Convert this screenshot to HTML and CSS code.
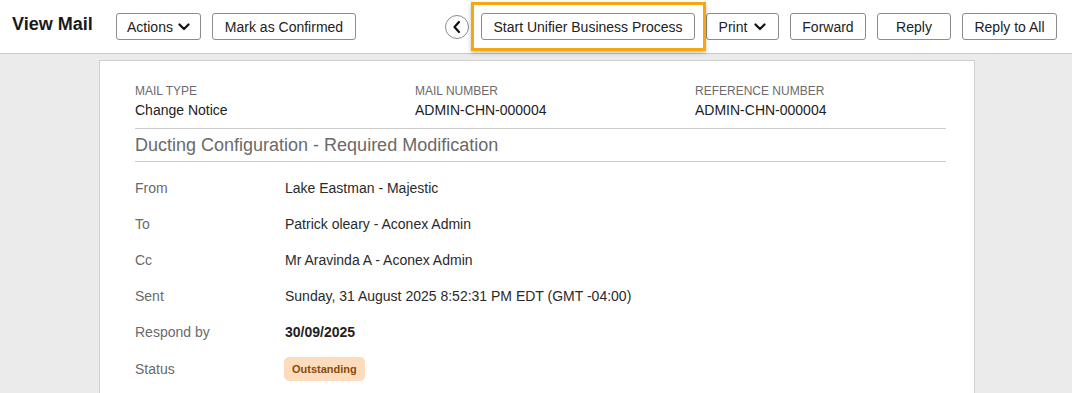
FILE: index.html
```html
<!DOCTYPE html>
<html>
<head>
<meta charset="utf-8">
<link rel="stylesheet" href="styles.css">
</head>
<body>
<header class="topbar">
  <h1 class="page-title">View Mail</h1>
  <div class="left-actions">
    <button class="btn btn-actions">Actions <svg class="caret" viewBox="0 0 12 8" width="12" height="8"><path d="M1.5 1.5 L6 6 L10.5 1.5" fill="none" stroke="#111" stroke-width="2.2" stroke-linecap="round" stroke-linejoin="round"/></svg></button>
    <button class="btn btn-confirm">Mark as Confirmed</button>
  </div>
  <div class="right-actions">
    <span class="circle-btn"><svg viewBox="0 0 24 24" width="24" height="24"><circle cx="12" cy="12" r="11.5" fill="#fff" stroke="#8a8a8a" stroke-width="1"/><path d="M14 7 L9.5 12 L14 17" fill="none" stroke="#111" stroke-width="2.2" stroke-linecap="round" stroke-linejoin="round"/></svg></span>
    <span class="highlight-wrap">
      <button class="btn btn-start">Start Unifier Business Process</button>
      <span class="highlight"></span>
    </span>
    <button class="btn btn-print">Print <svg class="caret" viewBox="0 0 12 8" width="12" height="8"><path d="M1.5 1.5 L6 6 L10.5 1.5" fill="none" stroke="#111" stroke-width="2.2" stroke-linecap="round" stroke-linejoin="round"/></svg></button>
    <button class="btn btn-forward">Forward</button>
    <button class="btn btn-reply">Reply</button>
    <button class="btn btn-replyall">Reply to All</button>
  </div>
</header>
<main class="content">
  <section class="card">
    <div class="meta">
      <div class="meta-item"><div class="meta-label">Mail Type</div><div class="meta-value">Change Notice</div></div>
      <div class="meta-item"><div class="meta-label">Mail Number</div><div class="meta-value">ADMIN-CHN-000004</div></div>
      <div class="meta-item"><div class="meta-label">Reference Number</div><div class="meta-value">ADMIN-CHN-000004</div></div>
    </div>
    <h2 class="subject">Ducting Configuration - Required Modification</h2>
    <dl class="fields">
      <div class="field"><dt>From</dt><dd>Lake Eastman - Majestic</dd></div>
      <div class="field"><dt>To</dt><dd>Patrick oleary - Aconex Admin</dd></div>
      <div class="field"><dt>Cc</dt><dd>Mr Aravinda A - Aconex Admin</dd></div>
      <div class="field"><dt>Sent</dt><dd>Sunday, 31 August 2025 8:52:31 PM EDT (GMT -04:00)</dd></div>
      <div class="field"><dt>Respond by</dt><dd class="strong">30/09/2025</dd></div>
      <div class="field field-status"><dt>Status</dt><dd><span class="badge">Outstanding</span></dd></div>
    </dl>
  </section>
</main>
</body>
</html>
```
FILE: styles.css
```css
* { box-sizing: border-box; }
html, body { margin: 0; padding: 0; }
body {
  font-family: "Liberation Sans", Arial, sans-serif;
  background: #ebebeb;
  color: #222;
  height: 393px;
  overflow: hidden;
}
.topbar {
  height: 54px;
  background: #fff;
  border-bottom: 1px solid #c8c8c8;
  display: flex;
  align-items: flex-start;
  padding: 0 15px 0 12px;
}
.page-title {
  margin: 13px 0 0 0;
  font-size: 18px;
  line-height: 22px;
  font-weight: bold;
  color: #1a1a1a;
  width: 104px;
}
.left-actions, .right-actions {
  display: flex;
  align-items: center;
  gap: 11px;
  margin-top: 13px;
}
.right-actions { margin-left: auto; }
.btn {
  height: 27px;
  padding: 0;
  border: 1px solid #8c8c8c;
  border-radius: 3px;
  background: #fff;
  font-family: "Liberation Sans", Arial, sans-serif;
  font-size: 14px;
  color: #222;
  display: inline-flex;
  align-items: center;
  justify-content: center;
  gap: 5px;
  cursor: pointer;
}
.btn-actions { width: 85px; }
.btn-confirm { width: 144px; }
.btn-start { width: 214px; }
.btn-print { width: 73px; gap: 7px; }
.btn-forward { width: 76px; }
.btn-reply { width: 74px; }
.btn-replyall { width: 95px; }
.caret { display: block; margin-top: 1px; }
.circle-btn {
  display: block;
  width: 24px;
  height: 24px;
  margin-right: 1px;
}
.circle-btn svg { display: block; }
.highlight-wrap {
  position: relative;
  display: block;
}
.highlight-wrap .btn { display: flex; }
.highlight {
  position: absolute;
  left: -10px;
  top: -11px;
  width: 235px;
  height: 49px;
  border: 3px solid #f5a70f;
  box-shadow: 0 2px 4px rgba(0,0,0,0.25);
  pointer-events: none;
}
.content {
  padding: 6px 0 0 99px;
}
.card {
  width: 876px;
  min-height: 400px;
  background: #fff;
  border: 1px solid #cfcfcf;
  padding: 23px 28px 0 35px;
}
.meta {
  display: grid;
  grid-template-columns: 250px 250px 250px;
  column-gap: 30px;
  padding-bottom: 9px;
  border-bottom: 1px solid #cccccc;
}
.meta-label {
  font-size: 12px;
  line-height: 14px;
  text-transform: uppercase;
  color: #6b6b6b;
}
.meta-value {
  margin-top: 3px;
  font-size: 14px;
  line-height: 18px;
  color: #222;
}
.subject {
  margin: 0;
  font-size: 18px;
  line-height: 32px;
  font-weight: normal;
  color: #6a6a6a;
  border-bottom: 1px solid #cccccc;
}
.fields {
  margin: 8px 0 0 0;
}
.field {
  display: flex;
  align-items: center;
  height: 36px;
  font-size: 14px;
}
.field-status { padding-top: 2px; }
.field dt {
  width: 150px;
  color: #6a6a6a;
}
.field dd {
  margin: 0;
  color: #2a2a2a;
}
.field dd.strong { font-weight: bold; color: #222; }
.badge {
  display: inline-block;
  background: #fcdcbd;
  color: #8a4a0c;
  font-size: 11px;
  font-weight: bold;
  line-height: 24px;
  padding: 0 8px;
  border-radius: 5px;
  margin-left: -1px;
}
```
